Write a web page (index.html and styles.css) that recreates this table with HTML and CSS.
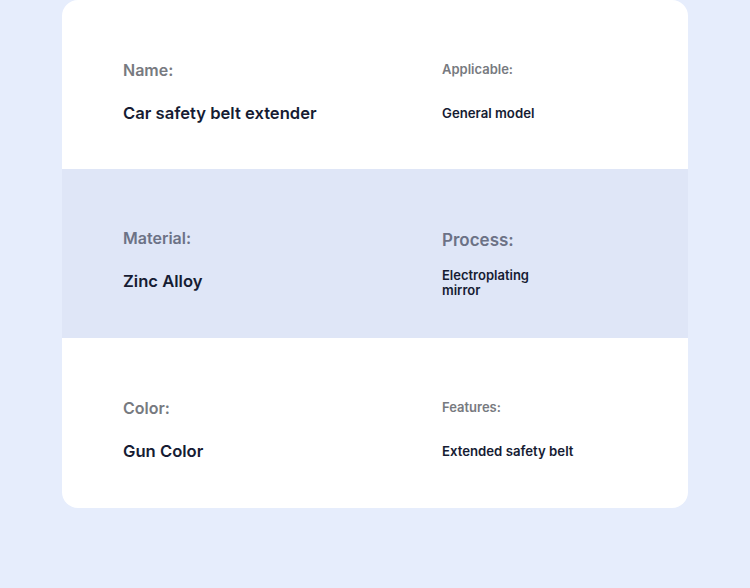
FILE: index.html
```html
<!DOCTYPE html>
<html>
<head>
<meta charset="utf-8">
<link rel="stylesheet" href="styles.css">
</head>
<body>
<div class="card">
  <div class="row">
    <div class="cell">
      <div class="label big">Name:</div>
      <div class="value big">Car safety belt extender</div>
    </div>
    <div class="cell right">
      <div class="label small">Applicable:</div>
      <div class="value small">General model</div>
    </div>
  </div>
  <div class="row band">
    <div class="cell">
      <div class="label big">Material:</div>
      <div class="value big">Zinc Alloy</div>
    </div>
    <div class="cell right">
      <div class="label big proc">Process:</div>
      <div class="value small multi">Electroplating<br>mirror</div>
    </div>
  </div>
  <div class="row last">
    <div class="cell">
      <div class="label big">Color:</div>
      <div class="value big">Gun Color</div>
    </div>
    <div class="cell right">
      <div class="label small">Features:</div>
      <div class="value small">Extended safety belt</div>
    </div>
  </div>
</div>
</body>
</html>
```
FILE: styles.css
```css
* { box-sizing: border-box; }
html, body { margin: 0; padding: 0; }
body {
  background: #e6edfc;
  width: 750px;
  height: 588px;
  font-family: Inter, "Noto Sans", sans-serif;
  overflow: hidden;
}
.card {
  margin-left: 62px;
  width: 626px;
  background: #ffffff;
  border-radius: 16px;
  overflow: hidden;
}
.row {
  display: grid;
  grid-template-columns: 319px 1fr;
  padding-left: 61px;
  height: 169px;
}
.row.last { height: 170px; }
.band { background: #dfe6f7; }
.cell { display: flex; flex-direction: column; }
.label { color: #777a80; font-weight: 600; }
.band .label { color: #6c7286; }
.value { color: #161c33; font-weight: 600; }
.label.big { font-size: 16px; line-height: 20px; margin-top: 60px; }
.value.big { font-size: 16.6px; line-height: 20px; margin-top: 23px; }
.band .label.big { margin-top: 59px; }
.label.small { font-size: 13px; line-height: 16px; margin-top: 61px; }
.value.small { font-size: 13.2px; line-height: 16px; margin-top: 28px; }
.band .label.proc { font-size: 17px; margin-top: 61px; }
.value.multi { font-size: 13px; line-height: 15px; margin-top: 18px; }
```
